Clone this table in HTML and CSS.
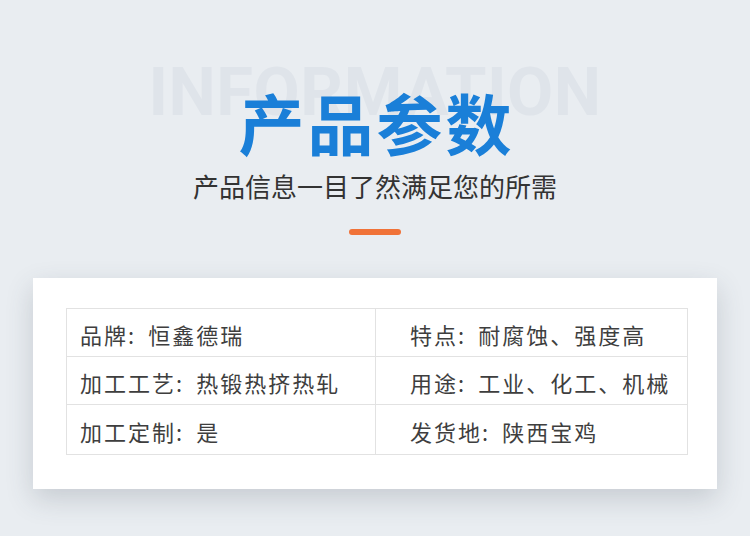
FILE: index.html
```html
<!DOCTYPE html>
<html lang="zh-CN">
<head>
<meta charset="utf-8">
<title>产品参数</title>
<link rel="stylesheet" href="styles.css">
</head>
<body>
<div class="page">
  <header class="hero">
    <div class="watermark">INFORMATION</div>
    <h1 class="title">产品参数</h1>
    <p class="subtitle">产品信息一目了然满足您的所需</p>
    <div class="bar"></div>
  </header>
  <section class="card">
    <table class="params">
      <tr>
        <td class="c-left"><span class="k">品牌:</span>恒鑫德瑞</td>
        <td class="c-right"><span class="k">特点:</span>耐腐蚀、强度高</td>
      </tr>
      <tr>
        <td class="c-left"><span class="k">加工工艺:</span>热锻热挤热轧</td>
        <td class="c-right"><span class="k">用途:</span>工业、化工、机械</td>
      </tr>
      <tr class="last">
        <td class="c-left"><span class="k">加工定制:</span>是</td>
        <td class="c-right"><span class="k">发货地:</span>陕西宝鸡</td>
      </tr>
    </table>
  </section>
</div>
</body>
</html>
```

FILE: styles.css
```css
html, body {
  margin: 0;
  padding: 0;
}
body {
  background: #e9edf1;
  font-family: "Noto Sans CJK SC", "Noto Sans", sans-serif;
  width: 750px;
  height: 536px;
  overflow: hidden;
}
.page {
  width: 750px;
}
.hero {
  position: relative;
  padding-top: 87px;
  display: flex;
  flex-direction: column;
  align-items: center;
}
.watermark {
  position: absolute;
  top: 59px;
  left: 0;
  right: 0;
  text-align: center;
  font-family: "Roboto", "Liberation Sans", sans-serif;
  font-weight: 700;
  font-size: 67px;
  line-height: 1;
  color: #dfe4ea;
  letter-spacing: 0.5px;
}
.title {
  position: relative;
  margin: 0;
  font-size: 66px;
  line-height: 68px;
  font-weight: 700;
  color: #1a7fd8;
  letter-spacing: 3px;
  padding-left: 3px;
}
.subtitle {
  margin: 18px 0 0;
  font-size: 26px;
  line-height: 26px;
  font-weight: 400;
  color: #333;
}
.bar {
  margin-top: 30px;
  width: 52px;
  height: 6px;
  border-radius: 3px;
  background: #f07238;
}
.card {
  margin: 43px 33px 0;
  width: 684px;
  box-sizing: border-box;
  background: #fff;
  padding: 30px 29px 34px 33px;
  box-shadow: 0 10px 26px rgba(60, 72, 85, 0.2);
}
.params {
  width: 622px;
  border-collapse: collapse;
  table-layout: fixed;
}
.params td {
  height: 45px;
  border: 1px solid #e2e2e2;
  font-size: 22px;
  line-height: 24px;
  letter-spacing: 2px;
  color: #3e3e3e;
  padding: 2px 0 0;
  vertical-align: middle;
  white-space: nowrap;
}
.params tr.last td {
  height: 47px;
}
.k {
  margin-right: 12px;
}
.c-left {
  width: 295px;
  padding-left: 13px !important;
}
.c-right {
  padding-left: 34px !important;
}
```
